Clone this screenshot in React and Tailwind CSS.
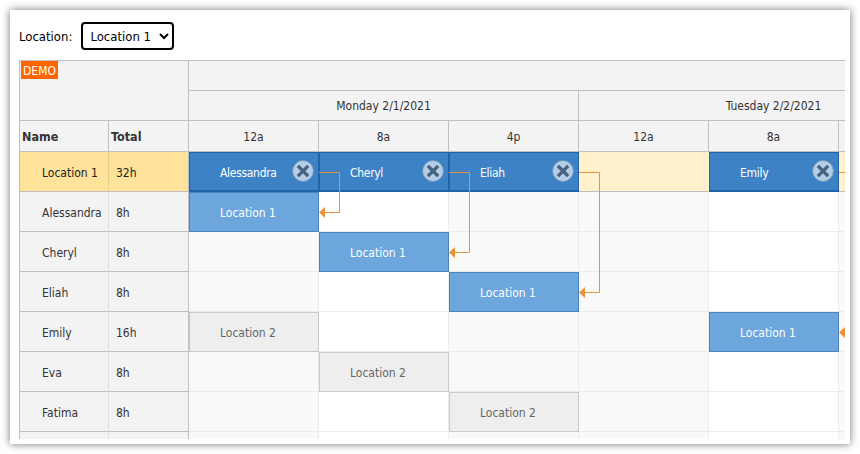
const font = "[font-family:'DejaVu_Sans_Condensed','DejaVu_Sans',sans-serif]";

const resources = [
  { name: 'Location 1', total: '32h', parent: true,
    events: { 0: 'Alessandra', 1: 'Cheryl', 2: 'Eliah', 4: 'Emily' } },
  { name: 'Alessandra', total: '8h', events: { 0: 'Location 1' } },
  { name: 'Cheryl', total: '8h', events: { 1: 'Location 1' } },
  { name: 'Eliah', total: '8h', events: { 2: 'Location 1' } },
  { name: 'Emily', total: '16h', events: { 0: 'Location 2', 4: 'Location 1' } },
  { name: 'Eva', total: '8h', events: { 1: 'Location 2' } },
  { name: 'Fatima', total: '8h', events: { 2: 'Location 2' } },
  { name: '', total: '', events: {} },
];

const hours = ['12a', '8a', '4p', '12a', '8a', '4p'];

function CancelIcon() {
  return (
    <svg width="22" height="22" viewBox="0 0 22 22" className="absolute right-[4px] top-[7px]">
      <circle cx="11" cy="11" r="10.4" fill="#b3cde6" stroke="#7f9db8" strokeWidth="0.8" />
      <path d="M7 7 L15 15 M15 7 L7 15" stroke="#46627f" strokeWidth="3.2" strokeLinecap="square" fill="none" />
    </svg>
  );
}

function Event({ text, parent }) {
  if (parent) {
    return (
      <div className="absolute left-0 top-0 w-[130px] h-[40px] flex items-center pl-[30px] pt-[2px] bg-[#3d82c4] border border-[#2163a6] border-b-2 text-white tracking-[-0.3px]">
        {text}
        <CancelIcon />
      </div>
    );
  }
  const grey = text === 'Location 2';
  return (
    <div className={grey
      ? 'absolute left-0 top-0 w-[130px] h-[40px] flex items-center pl-[30px] pt-[2px] bg-[#eeeeee] border border-[#c8c8c8] text-[#666666]'
      : 'absolute left-0 top-0 w-[130px] h-[40px] flex items-center pl-[30px] pt-[2px] bg-[#6ca6dc] border border-[#4a84bc] text-white'}>
      {text}
    </div>
  );
}

function Row({ res }) {
  return (
    <div className="flex h-[40px] shrink-0">
      <div className={res.parent
        ? 'w-[89px] shrink-0 flex items-center pl-[22px] pt-[3px] bg-[#ffe39b] border-b border-r border-[#c0c0c0] border-r-[#e6d08f] text-[#222222]'
        : 'w-[89px] shrink-0 flex items-center pl-[22px] pt-[3px] bg-[#f3f3f3] border-b border-r border-[#c0c0c0] border-r-[#e0e0e0] text-[#333333]'}>
        {res.name}
      </div>
      <div className={res.parent
        ? 'w-[80px] shrink-0 flex items-center pl-[7px] pt-[3px] bg-[#ffe39b] border-b border-r border-[#c0c0c0] text-[#222222]'
        : 'w-[80px] shrink-0 flex items-center pl-[7px] pt-[3px] bg-[#f3f3f3] border-b border-r border-[#c0c0c0] text-[#333333]'}>
        {res.total}
      </div>
      {hours.map((h, i) => (
        <div key={i} className={
          'relative w-[130px] shrink-0 border-r border-b ' +
          (res.parent
            ? 'bg-[#fff1cc] border-r-[#fff1cc] border-b-[#c0c0c0]'
            : h === '8a'
              ? 'bg-white border-[#ececec]'
              : 'bg-[#f9f9f9] border-[#ececec]')}>
          {res.events[i] && <Event text={res.events[i]} parent={res.parent} />}
        </div>
      ))}
    </div>
  );
}

function Links() {
  const lines = [
    'M319 172.5 H339.5 V212.5 H324',
    'M449 172.5 H469.5 V252.5 H454',
    'M579 172.5 H599.5 V292.5 H584',
    'M839 172.5 H846',
  ];
  const tips = [[319, 212.5], [449, 252.5], [579, 292.5], [839, 332.5]];
  return (
    <svg viewBox="19 60 826 379" width="826" height="379" className="absolute left-0 top-0 pointer-events-none">
      {lines.map((d, i) => <path key={i} d={d} fill="none" stroke="#e8923a" strokeWidth="1" />)}
      {tips.map(([x, y], i) => (
        <path key={i} d={`M${x} ${y} L${x + 6} ${y - 5.5} V${y + 5.5} Z`} fill="#e8923a" />
      ))}
    </svg>
  );
}

export default function App() {
  return (
    <div className={'min-h-screen bg-white p-[10px] text-[12px] ' + font}>
      <div className="w-[840px] h-[434px] bg-white shadow-[0_0_8px_rgba(0,0,0,0.55)] pl-[9px] pt-[12px]">
        <div className="flex items-center h-[28px] text-[13px] text-black">
          <span className="pt-[1px]">Location:</span>
          <select className="ml-[9px] w-[93px] h-[28px] pl-[3px] bg-white border-2 border-black rounded-[4px] text-[13px] text-black">
            <option>Location 1</option>
            <option>Location 2</option>
          </select>
        </div>

        <div className="relative mt-[10px] w-[826px] h-[379px] overflow-hidden text-[#333333]">
          {/* time header */}
          <div className="flex">
            <div className="relative w-[170px] shrink-0 h-[61px] bg-[#f3f3f3] border-t border-l border-r border-b border-[#c0c0c0]">
              <span className="absolute left-[1px] top-0 h-[18px] px-[2px] pt-[1px] bg-[#ff6600] text-white leading-[18px]">DEMO</span>
            </div>
            <div className="flex-1 min-w-0 overflow-hidden">
              <div className="h-[31px] bg-[#f3f3f3] border-t border-b border-[#c0c0c0]" />
              <div className="flex w-[1000px] h-[30px] bg-[#f3f3f3] border-b border-[#c0c0c0]">
                <div className="w-[390px] shrink-0 flex items-center justify-center pt-[1px] border-r border-[#c0c0c0]">Monday 2/1/2021</div>
                <div className="w-[390px] shrink-0 flex items-center justify-center pt-[1px] border-r border-[#c0c0c0]">Tuesday 2/2/2021</div>
              </div>
            </div>
          </div>
          <div className="flex h-[31px] bg-[#f3f3f3] border-b border-[#c0c0c0]">
            <div className="w-[90px] shrink-0 flex items-center pl-[2px] pt-[2px] font-bold text-[12.5px] border-x border-[#c0c0c0]">Name</div>
            <div className="w-[80px] shrink-0 flex items-center pl-[2px] pt-[2px] font-bold text-[12.5px] border-r border-[#c0c0c0]">Total</div>
            {hours.map((h, i) => (
              <div key={i} className="w-[130px] shrink-0 flex items-center justify-center pt-[2px] border-r border-[#c0c0c0]">{i < 5 ? h : ''}</div>
            ))}
          </div>

          {/* rows */}
          <div className="border-l border-[#c0c0c0]">
            {resources.map((r, i) => <Row key={i} res={r} />)}
          </div>

          <Links />
        </div>
      </div>
    </div>
  );
}
